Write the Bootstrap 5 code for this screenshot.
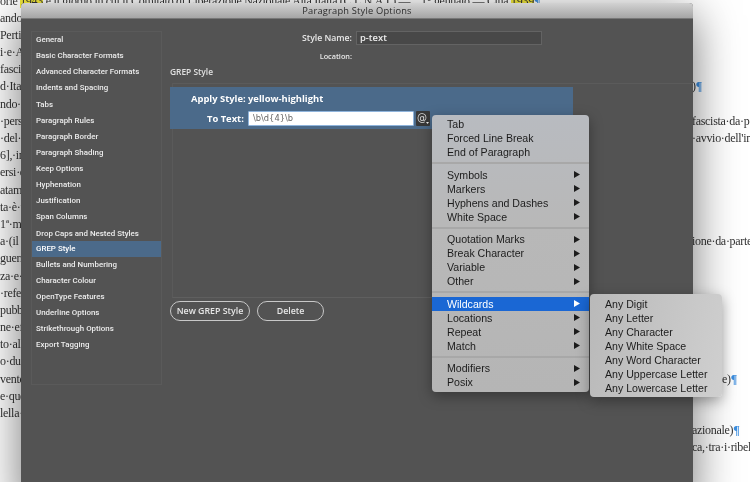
<!DOCTYPE html>
<html lang="it">
<head>
<meta charset="utf-8">
<title>Paragraph Style Options</title>
<link href="https://cdn.jsdelivr.net/npm/bootstrap@5.3.0/dist/css/bootstrap.min.css" rel="stylesheet">
<style>
html,body{height:482px;overflow:hidden;background:#fff}
body{position:relative;width:750px;filter:blur(.4px)}
.docpage{font-family:"Liberation Serif",serif;font-size:12px;letter-spacing:-.3px;color:#333;white-space:nowrap;margin-top:-7.5px}
.docline{height:17.2px;line-height:17.2px;overflow:hidden;display:flex}
.docline mark{padding:0;background:#f4ea3c;color:#333}
.pilcrow{color:#3b8ee0;font-weight:700}
.leftcell{width:692px;flex:none}
.topfirst{width:421px;flex:none;overflow:hidden}
.farcell{padding-left:30px}
.appwin{position:absolute;left:21px;top:3px;width:672px;height:500px;background:#535353;border-radius:4px 4px 0 0;box-shadow:0 12px 46px rgba(0,0,0,.55);font-family:"Open Sans",sans-serif;color:#e8e8e8}
.wintitle{height:16px;line-height:16px;background:linear-gradient(#d2d2d2,#a5a5a5);border-bottom:1px solid #777;color:#2b2b2b;font-size:9.3px;font-weight:500;letter-spacing:.2px;border-radius:4px 4px 0 0}
.winbody{padding:12px 0 0 10px;gap:8px}
.sidenav{width:131px;height:354px;border:1px solid #5a5a5a;background:transparent;border-radius:0;flex:none}
.sidenav .list-group-item{background:transparent;border:0;border-radius:0;color:#ececec;height:16.13px;line-height:15.5px;padding:0 0 0 4px;font-family:Roboto,sans-serif;font-size:7.9px;font-weight:500;letter-spacing:.02px;white-space:nowrap}
.sidenav .list-group-item.active{background:#4b6a8a;color:#fff}
.mainpane{width:523px;flex:none}
.namerow{height:14px;gap:4px}
.fieldlabel{width:182px;text-align:right;font-size:8.7px;font-weight:600;flex:none;padding-top:1px}
.namebox{width:186px;height:14px;background:#484848;border:1px solid #636363;color:#eee;font-size:9.4px;line-height:12px;padding:0 3px;font-weight:600}
.locrow{height:12px;margin-top:5px;font-size:7.3px;font-weight:600;line-height:12px}
.locrow span{width:182px;text-align:right}
.secthead{margin:3px 0 0;font-size:8.4px;line-height:14px;height:14px;font-weight:600;color:#e0e0e0}
.rulespanel{margin-top:4px;height:215px;padding-top:3px;margin-left:2px;border-top:1px solid #5b5b5b;border-left:1px solid #5a5a5a;border-bottom:1px solid #5f5f5f}
.ruleblue{margin-left:-3px;width:403px;height:42px;background:#4b6a8a;color:#fff;font-size:9.4px;font-weight:700;position:relative}
.applyline{padding:5px 0 0 21px;height:23px;line-height:14px}
.textline{padding-left:37px;height:17px;line-height:16px}
.textline label{width:41px;font-size:9.4px}
.regexfield{width:166px;height:15px;padding:0 0 0 4px;border:1px solid #8fb4dc;border-radius:1px;background:#fff;color:#666;font-family:"DejaVu Sans",sans-serif;font-size:8.3px;line-height:13px;font-weight:400;margin-right:2px}
.atbtn{width:14px;height:15px;background:#383838;color:#ddd;font-family:"DejaVu Sans",sans-serif;font-size:10px;line-height:14px;font-weight:400;border-radius:1px;position:relative;padding-right:2px;text-align:center}
.atdrop{position:absolute;right:1px;bottom:2px;width:3px;height:2px;fill:#eee}
.btnrow{margin-top:3px;gap:7px}
.pillbtn{height:20px;line-height:17px;padding:0;border:1px solid #c8c8c8;color:#e6e6e6;background:transparent;font-size:8.8px;font-weight:600}
.pillbtn.wide{width:80px}.pillbtn.narrow{width:67px}
.popmenu{position:absolute;display:block;min-width:0;margin:0;border:0;border-radius:4px;font-family:"Liberation Sans",sans-serif;font-size:10.6px;color:#1c1c1c;box-shadow:0 4px 14px rgba(0,0,0,.35)}
.popmenu .dropdown-item{height:14px;line-height:14px;padding:0 9px 0 15px;color:#1c1c1c;display:flex;justify-content:space-between;align-items:center}
.popmenu .dropdown-item.active{background:#1a67d4;color:#fff}
.popmenu .dropdown-divider{margin:3.25px 0;border-top:2px solid #a8a8a8;opacity:1}
.mainmenu{left:432px;top:115px;width:157px;height:277px;padding:2px 0;background:linear-gradient(#b8bbc0,#b8b8b8 40%,#b5b5b5)}
.submenu{left:590px;top:294px;width:132px;height:103px;padding:3px 0;background:linear-gradient(100deg,#b9b9b9,#cfcfcf)}
.tri{width:6px;height:7px;flex:none;fill:currentColor}
</style>
</head>
<body>
<div class="docpage">
<div class="docline"><span class="topfirst">orie <mark>1943</mark> e il giorno in cui il Comitato di Liberazione Nazionale Alta Italia (C.L.N.A.I.) —</span><span>1° gennaio — Cina <mark>1939</mark><span class="pilcrow">¶</span></span></div>
<div class="docline">ando·la</div>
<div class="docline">Pertini·e</div>
<div class="docline">i·e·Al</div>
<div class="docline">fascis</div>
<div class="docline"><span class="leftcell">d·Itali</span><span>)<span class="pilcrow">¶</span></span></div>
<div class="docline">ndo·la</div>
<div class="docline"><span class="leftcell">·pers</span><span>fascista·da·p</span></div>
<div class="docline"><span class="leftcell">·del·C</span><span>·avvio·dell'in</span></div>
<div class="docline">6],·in</div>
<div class="docline">ersi·e</div>
<div class="docline">atame</div>
<div class="docline">ta·è·u</div>
<div class="docline">1ª·ma</div>
<div class="docline"><span class="leftcell">a·(il</span><span>ione·da·parte</span></div>
<div class="docline">guerr</div>
<div class="docline">za·e·</div>
<div class="docline">·refer</div>
<div class="docline">pubbl</div>
<div class="docline">ne·eff</div>
<div class="docline">to·all</div>
<div class="docline">o·dur</div>
<div class="docline"><span class="leftcell">vente</span><span class="farcell">e)<span class="pilcrow">¶</span></span></div>
<div class="docline">e·que</div>
<div class="docline">lella·l</div>
<div class="docline"><span class="leftcell"></span><span>azionale)<span class="pilcrow">¶</span></span></div>
<div class="docline"><span class="leftcell"></span><span>ca,·tra·i·ribell</span></div>
</div>

<div class="appwin">
  <div class="wintitle text-center">Paragraph Style Options</div>
  <div class="winbody d-flex">
    <div class="list-group sidenav">
      <a class="list-group-item">General</a>
      <a class="list-group-item">Basic Character Formats</a>
      <a class="list-group-item">Advanced Character Formats</a>
      <a class="list-group-item">Indents and Spacing</a>
      <a class="list-group-item">Tabs</a>
      <a class="list-group-item">Paragraph Rules</a>
      <a class="list-group-item">Paragraph Border</a>
      <a class="list-group-item">Paragraph Shading</a>
      <a class="list-group-item">Keep Options</a>
      <a class="list-group-item">Hyphenation</a>
      <a class="list-group-item">Justification</a>
      <a class="list-group-item">Span Columns</a>
      <a class="list-group-item">Drop Caps and Nested Styles</a>
      <a class="list-group-item active">GREP Style</a>
      <a class="list-group-item">Bullets and Numbering</a>
      <a class="list-group-item">Character Colour</a>
      <a class="list-group-item">OpenType Features</a>
      <a class="list-group-item">Underline Options</a>
      <a class="list-group-item">Strikethrough Options</a>
      <a class="list-group-item">Export Tagging</a>
    </div>
    <div class="mainpane">
      <div class="namerow d-flex align-items-center">
        <span class="fieldlabel">Style Name:</span>
        <div class="namebox">p-text</div>
      </div>
      <div class="locrow d-flex"><span>Location:</span></div>
      <div class="secthead">GREP Style</div>
      <div class="rulespanel">
        <div class="ruleblue">
          <div class="applyline">Apply Style: yellow-highlight</div>
          <div class="textline d-flex align-items-center">
            <label>To Text:</label>
            <div class="regexfield">\b\d{4}\b</div>
            <div class="atbtn">@<svg class="atdrop" viewBox="0 0 3 2"><path d="M0 0H3L1.5 2z"/></svg></div>
          </div>
        </div>
      </div>
      <div class="btnrow d-flex">
        <button type="button" class="btn pillbtn wide rounded-pill">New GREP Style</button>
        <button type="button" class="btn pillbtn narrow rounded-pill">Delete</button>
      </div>
    </div>
  </div>
</div>

<div class="dropdown-menu popmenu mainmenu">
  <a class="dropdown-item">Tab</a>
  <a class="dropdown-item">Forced Line Break</a>
  <a class="dropdown-item">End of Paragraph</a>
  <hr class="dropdown-divider">
  <a class="dropdown-item">Symbols<svg class="tri" viewBox="0 0 6 7"><path d="M0 0L6 3.5L0 7z"/></svg></a>
  <a class="dropdown-item">Markers<svg class="tri" viewBox="0 0 6 7"><path d="M0 0L6 3.5L0 7z"/></svg></a>
  <a class="dropdown-item">Hyphens and Dashes<svg class="tri" viewBox="0 0 6 7"><path d="M0 0L6 3.5L0 7z"/></svg></a>
  <a class="dropdown-item">White Space<svg class="tri" viewBox="0 0 6 7"><path d="M0 0L6 3.5L0 7z"/></svg></a>
  <hr class="dropdown-divider">
  <a class="dropdown-item">Quotation Marks<svg class="tri" viewBox="0 0 6 7"><path d="M0 0L6 3.5L0 7z"/></svg></a>
  <a class="dropdown-item">Break Character<svg class="tri" viewBox="0 0 6 7"><path d="M0 0L6 3.5L0 7z"/></svg></a>
  <a class="dropdown-item">Variable<svg class="tri" viewBox="0 0 6 7"><path d="M0 0L6 3.5L0 7z"/></svg></a>
  <a class="dropdown-item">Other<svg class="tri" viewBox="0 0 6 7"><path d="M0 0L6 3.5L0 7z"/></svg></a>
  <hr class="dropdown-divider">
  <a class="dropdown-item active">Wildcards<svg class="tri" viewBox="0 0 6 7"><path d="M0 0L6 3.5L0 7z"/></svg></a>
  <a class="dropdown-item">Locations<svg class="tri" viewBox="0 0 6 7"><path d="M0 0L6 3.5L0 7z"/></svg></a>
  <a class="dropdown-item">Repeat<svg class="tri" viewBox="0 0 6 7"><path d="M0 0L6 3.5L0 7z"/></svg></a>
  <a class="dropdown-item">Match<svg class="tri" viewBox="0 0 6 7"><path d="M0 0L6 3.5L0 7z"/></svg></a>
  <hr class="dropdown-divider">
  <a class="dropdown-item">Modifiers<svg class="tri" viewBox="0 0 6 7"><path d="M0 0L6 3.5L0 7z"/></svg></a>
  <a class="dropdown-item">Posix<svg class="tri" viewBox="0 0 6 7"><path d="M0 0L6 3.5L0 7z"/></svg></a>
</div>
<div class="dropdown-menu popmenu submenu">
  <a class="dropdown-item">Any Digit</a>
  <a class="dropdown-item">Any Letter</a>
  <a class="dropdown-item">Any Character</a>
  <a class="dropdown-item">Any White Space</a>
  <a class="dropdown-item">Any Word Character</a>
  <a class="dropdown-item">Any Uppercase Letter</a>
  <a class="dropdown-item">Any Lowercase Letter</a>
</div>
<script src="https://cdn.jsdelivr.net/npm/bootstrap@5.3.0/dist/js/bootstrap.bundle.min.js"></script>
</body>
</html>
